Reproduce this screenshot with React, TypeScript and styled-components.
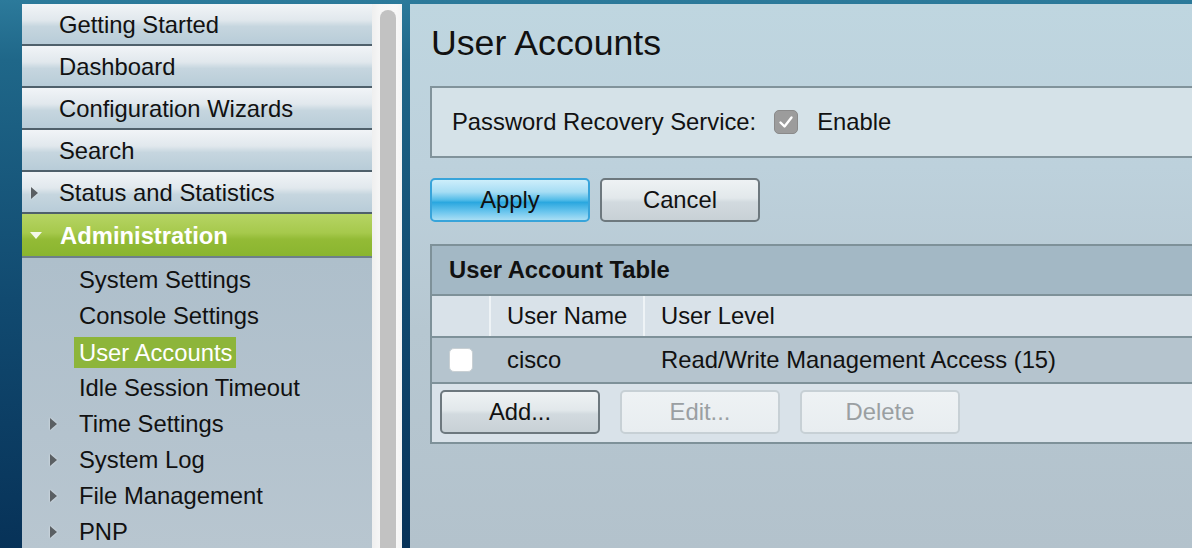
import React from "react";
import styled, { createGlobalStyle, css } from "styled-components";

const Global = createGlobalStyle`
  html, body { margin: 0; padding: 0; height: 100%; overflow: hidden; }
  body {
    font-family: "Liberation Sans", Arial, Helvetica, sans-serif;
    background: #1d6386;
  }
  #root { height: 100%; }
`;

const Page = styled.div`
  display: flex;
  height: 548px;
  overflow: hidden;
  box-sizing: border-box;
  padding: 4px 0 0 22px;
  background: linear-gradient(180deg, #2c7a9b 0px, #1f6789 60px, #114a70 300px, #073258 548px);
  font-size: 23.8px;
  color: #111;
`;

const Sidebar = styled.nav`
  width: 350px;
  flex: none;
  display: flex;
  flex-direction: column;
  overflow: hidden;
`;

const TopItem = styled.div<{ $active?: boolean }>`
  height: 42px;
  flex: none;
  display: flex;
  align-items: center;
  padding: 1px 0 0 9px;
  box-sizing: border-box;
  border-bottom: 2px solid #4f606b;
  background: linear-gradient(180deg, #f1f4f7 0%, #e1e8ed 40%, #c6d6df 56%, #b8ccd8 100%);
  ${(p) =>
    p.$active &&
    css`
      height: 44px;
      color: #fff;
      font-weight: bold;
      border-bottom-color: #6d7f8a;
      background: linear-gradient(180deg, #b6d464 0%, #a6c94c 45%, #93bb36 60%, #8ab52f 100%);
    `}
`;

const ArrowSlot = styled.span<{ $w: number }>`
  width: ${(p) => p.$w}px;
  flex: none;
  display: flex;
  align-items: center;
`;

const RightArrow = styled.span`
  width: 0;
  height: 0;
  border-top: 6px solid transparent;
  border-bottom: 6px solid transparent;
  border-left: 7px solid #5a5f63;
  filter: drop-shadow(0 0 1px rgba(255, 255, 255, 0.6));
`;

const DownArrow = styled.span`
  width: 0;
  height: 0;
  margin-left: -1px;
  border-left: 6px solid transparent;
  border-right: 6px solid transparent;
  border-top: 7px solid #f4f8ea;
`;

const SubList = styled.div`
  flex: 1;
  padding-top: 4px;
  background: linear-gradient(180deg, #aebfcb 0%, #b4c3ce 60%, #b8c6d0 100%);
`;

const SubItem = styled.div`
  height: 36px;
  display: flex;
  align-items: center;
  padding-left: 28px;
`;

const SubLabel = styled.span<{ $selected?: boolean }>`
  ${(p) =>
    p.$selected &&
    css`
      margin-left: -5px;
      padding: 0 4px 0 5px;
      height: 31px;
      line-height: 31px;
      background: #8db53a;
      color: #fff;
    `}
`;

const ScrollTrack = styled.div`
  width: 30px;
  flex: none;
  display: flex;
  justify-content: center;
  overflow: hidden;
  padding-top: 6px;
  box-sizing: border-box;
  background: linear-gradient(90deg, #efefef 0px, #f6f6f6 8px, #f8f8f8 24px, #f4f4f4 30px);
`;

const ScrollThumb = styled.div`
  width: 16px;
  margin-right: -2px;
  flex: none;
  height: 600px;
  border-radius: 8px 8px 0 0;
  background: #c2c2c2;
`;

const Main = styled.main`
  flex: 1;
  margin-left: 8px;
  overflow: hidden;
  padding: 19px 0 0 20px;
  background: linear-gradient(180deg, #bfd6e0 0%, #bdd1dc 30%, #b6c7d1 60%, #b3c2cc 100%);
`;

const Title = styled.h1`
  margin: 0 0 23px 1px;
  font-size: 35.7px;
  font-weight: normal;
  line-height: 40px;
  color: #111;
`;

const SettingBox = styled.div`
  height: 72px;
  box-sizing: border-box;
  margin-right: -10px;
  display: flex;
  align-items: center;
  padding-left: 20px;
  border: 2px solid #81939b;
  background: #d5e2e8;
`;

const CheckBox = styled.span<{ $checked?: boolean }>`
  width: 24px;
  height: 24px;
  box-sizing: border-box;
  border-radius: 5px;
  display: inline-flex;
  align-items: center;
  justify-content: center;
  flex: none;
  ${(p) =>
    p.$checked
      ? css`
          background: #9c9c9c;
          border: 1px solid #8a8a8a;
        `
      : css`
          background: #fff;
          border: 1px solid #c9d0d4;
        `}
`;

const Spaced = styled.span<{ $l: number }>`
  display: inline-flex;
  margin-left: ${(p) => p.$l}px;
`;

const ButtonRow = styled.div<{ $gap: number }>`
  display: flex;
  gap: ${(p) => p.$gap}px;
`;

const ActionBar = styled(ButtonRow)`
  margin: 20px 0 22px;
`;

const Button = styled.button<{ $variant?: "primary" | "default" | "disabled" }>`
  width: 160px;
  height: 44px;
  box-sizing: border-box;
  border-radius: 5px;
  font-family: inherit;
  font-size: 23.8px;
  color: #111;
  padding: 0;
  cursor: default;
  border: 2px solid #6d787e;
  background: linear-gradient(180deg, #eef2f4 0%, #e2e8eb 45%, #d2dadf 55%, #c8d1d6 100%);
  ${(p) =>
    p.$variant === "primary" &&
    css`
      border: 2px solid #38a4da;
      background: linear-gradient(180deg, #cdeefb 0%, #a6ddf4 30%, #53bce8 50%, #2aa7df 56%, #6cc6ee 80%, #a9def4 100%);
    `}
  ${(p) =>
    p.$variant === "disabled" &&
    css`
      color: #9a9fa2;
      border: 2px solid #c7d0d5;
      background: linear-gradient(180deg, #eef2f4 0%, #e8edf0 100%);
    `}
`;

const Table = styled.div`
  margin-right: -10px;
  border: 2px solid #7e9199;
  border-right: none;
  display: flex;
  flex-direction: column;
`;

const TableCaption = styled.div`
  height: 48px;
  display: flex;
  align-items: center;
  padding-left: 17px;
  font-weight: bold;
  background: #a3b8c5;
  border-bottom: 2px solid #7e9199;
`;

const Row = styled.div<{ $kind: "head" | "data" }>`
  height: ${(p) => (p.$kind === "head" ? 42 : 46)}px;
  box-sizing: border-box;
  display: grid;
  grid-template-columns: 59px 154px 1fr;
  align-items: stretch;
  border-bottom: 2px solid #7e9199;
  background: ${(p) => (p.$kind === "head" ? "#d9e2e9" : "#b5c4ce")};
`;

const Cell = styled.div<{ $sep?: boolean; $center?: boolean }>`
  display: flex;
  align-items: center;
  padding-left: ${(p) => (p.$center ? 17 : 16)}px;
  ${(p) =>
    p.$sep &&
    css`
      border-right: 2px solid #eef3f6;
    `}
`;

const TableButtons = styled(ButtonRow)`
  height: 58px;
  box-sizing: border-box;
  padding: 6px 0 0 8px;
  background: #d9e2e9;
`;

const CheckMark = () => (
  <svg width="16" height="14" viewBox="0 0 16 14">
    <path d="M2.5 7.5 L6.5 11.5 L13.5 2.5" fill="none" stroke="#fff" strokeWidth="2.4" strokeLinecap="round" strokeLinejoin="round" />
  </svg>
);

const topItems = ["Getting Started", "Dashboard", "Configuration Wizards", "Search"];
const subItems: { label: string; arrow?: boolean; selected?: boolean }[] = [
  { label: "System Settings" },
  { label: "Console Settings" },
  { label: "User Accounts", selected: true },
  { label: "Idle Session Timeout" },
  { label: "Time Settings", arrow: true },
  { label: "System Log", arrow: true },
  { label: "File Management", arrow: true },
  { label: "PNP", arrow: true },
];

export default function App() {
  return (
    <>
      <Global />
      <Page>
        <Sidebar>
          {topItems.map((t) => (
            <TopItem key={t}>
              <ArrowSlot $w={28} />
              {t}
            </TopItem>
          ))}
          <TopItem>
            <ArrowSlot $w={28}>
              <RightArrow />
            </ArrowSlot>
            Status and Statistics
          </TopItem>
          <TopItem $active>
            <ArrowSlot $w={29}>
              <DownArrow />
            </ArrowSlot>
            Administration
          </TopItem>
          <SubList>
            {subItems.map((s) => (
              <SubItem key={s.label}>
                <ArrowSlot $w={29}>{s.arrow && <RightArrow />}</ArrowSlot>
                <SubLabel $selected={s.selected}>{s.label}</SubLabel>
              </SubItem>
            ))}
          </SubList>
        </Sidebar>
        <ScrollTrack>
          <ScrollThumb />
        </ScrollTrack>
        <Main>
          <Title>User Accounts</Title>
          <SettingBox>
            Password Recovery Service:
            <Spaced $l={18}>
              <CheckBox $checked>
                <CheckMark />
              </CheckBox>
            </Spaced>
            <Spaced $l={19}>Enable</Spaced>
          </SettingBox>
          <ActionBar $gap={10}>
            <Button $variant="primary">Apply</Button>
            <Button>Cancel</Button>
          </ActionBar>
          <Table>
            <TableCaption>User Account Table</TableCaption>
            <Row $kind="head">
              <Cell $sep />
              <Cell $sep>User Name</Cell>
              <Cell>User Level</Cell>
            </Row>
            <Row $kind="data">
              <Cell $center>
                <CheckBox />
              </Cell>
              <Cell>cisco</Cell>
              <Cell>Read/Write Management Access (15)</Cell>
            </Row>
            <TableButtons $gap={20}>
              <Button>Add...</Button>
              <Button $variant="disabled">Edit...</Button>
              <Button $variant="disabled">Delete</Button>
            </TableButtons>
          </Table>
        </Main>
      </Page>
    </>
  );
}
